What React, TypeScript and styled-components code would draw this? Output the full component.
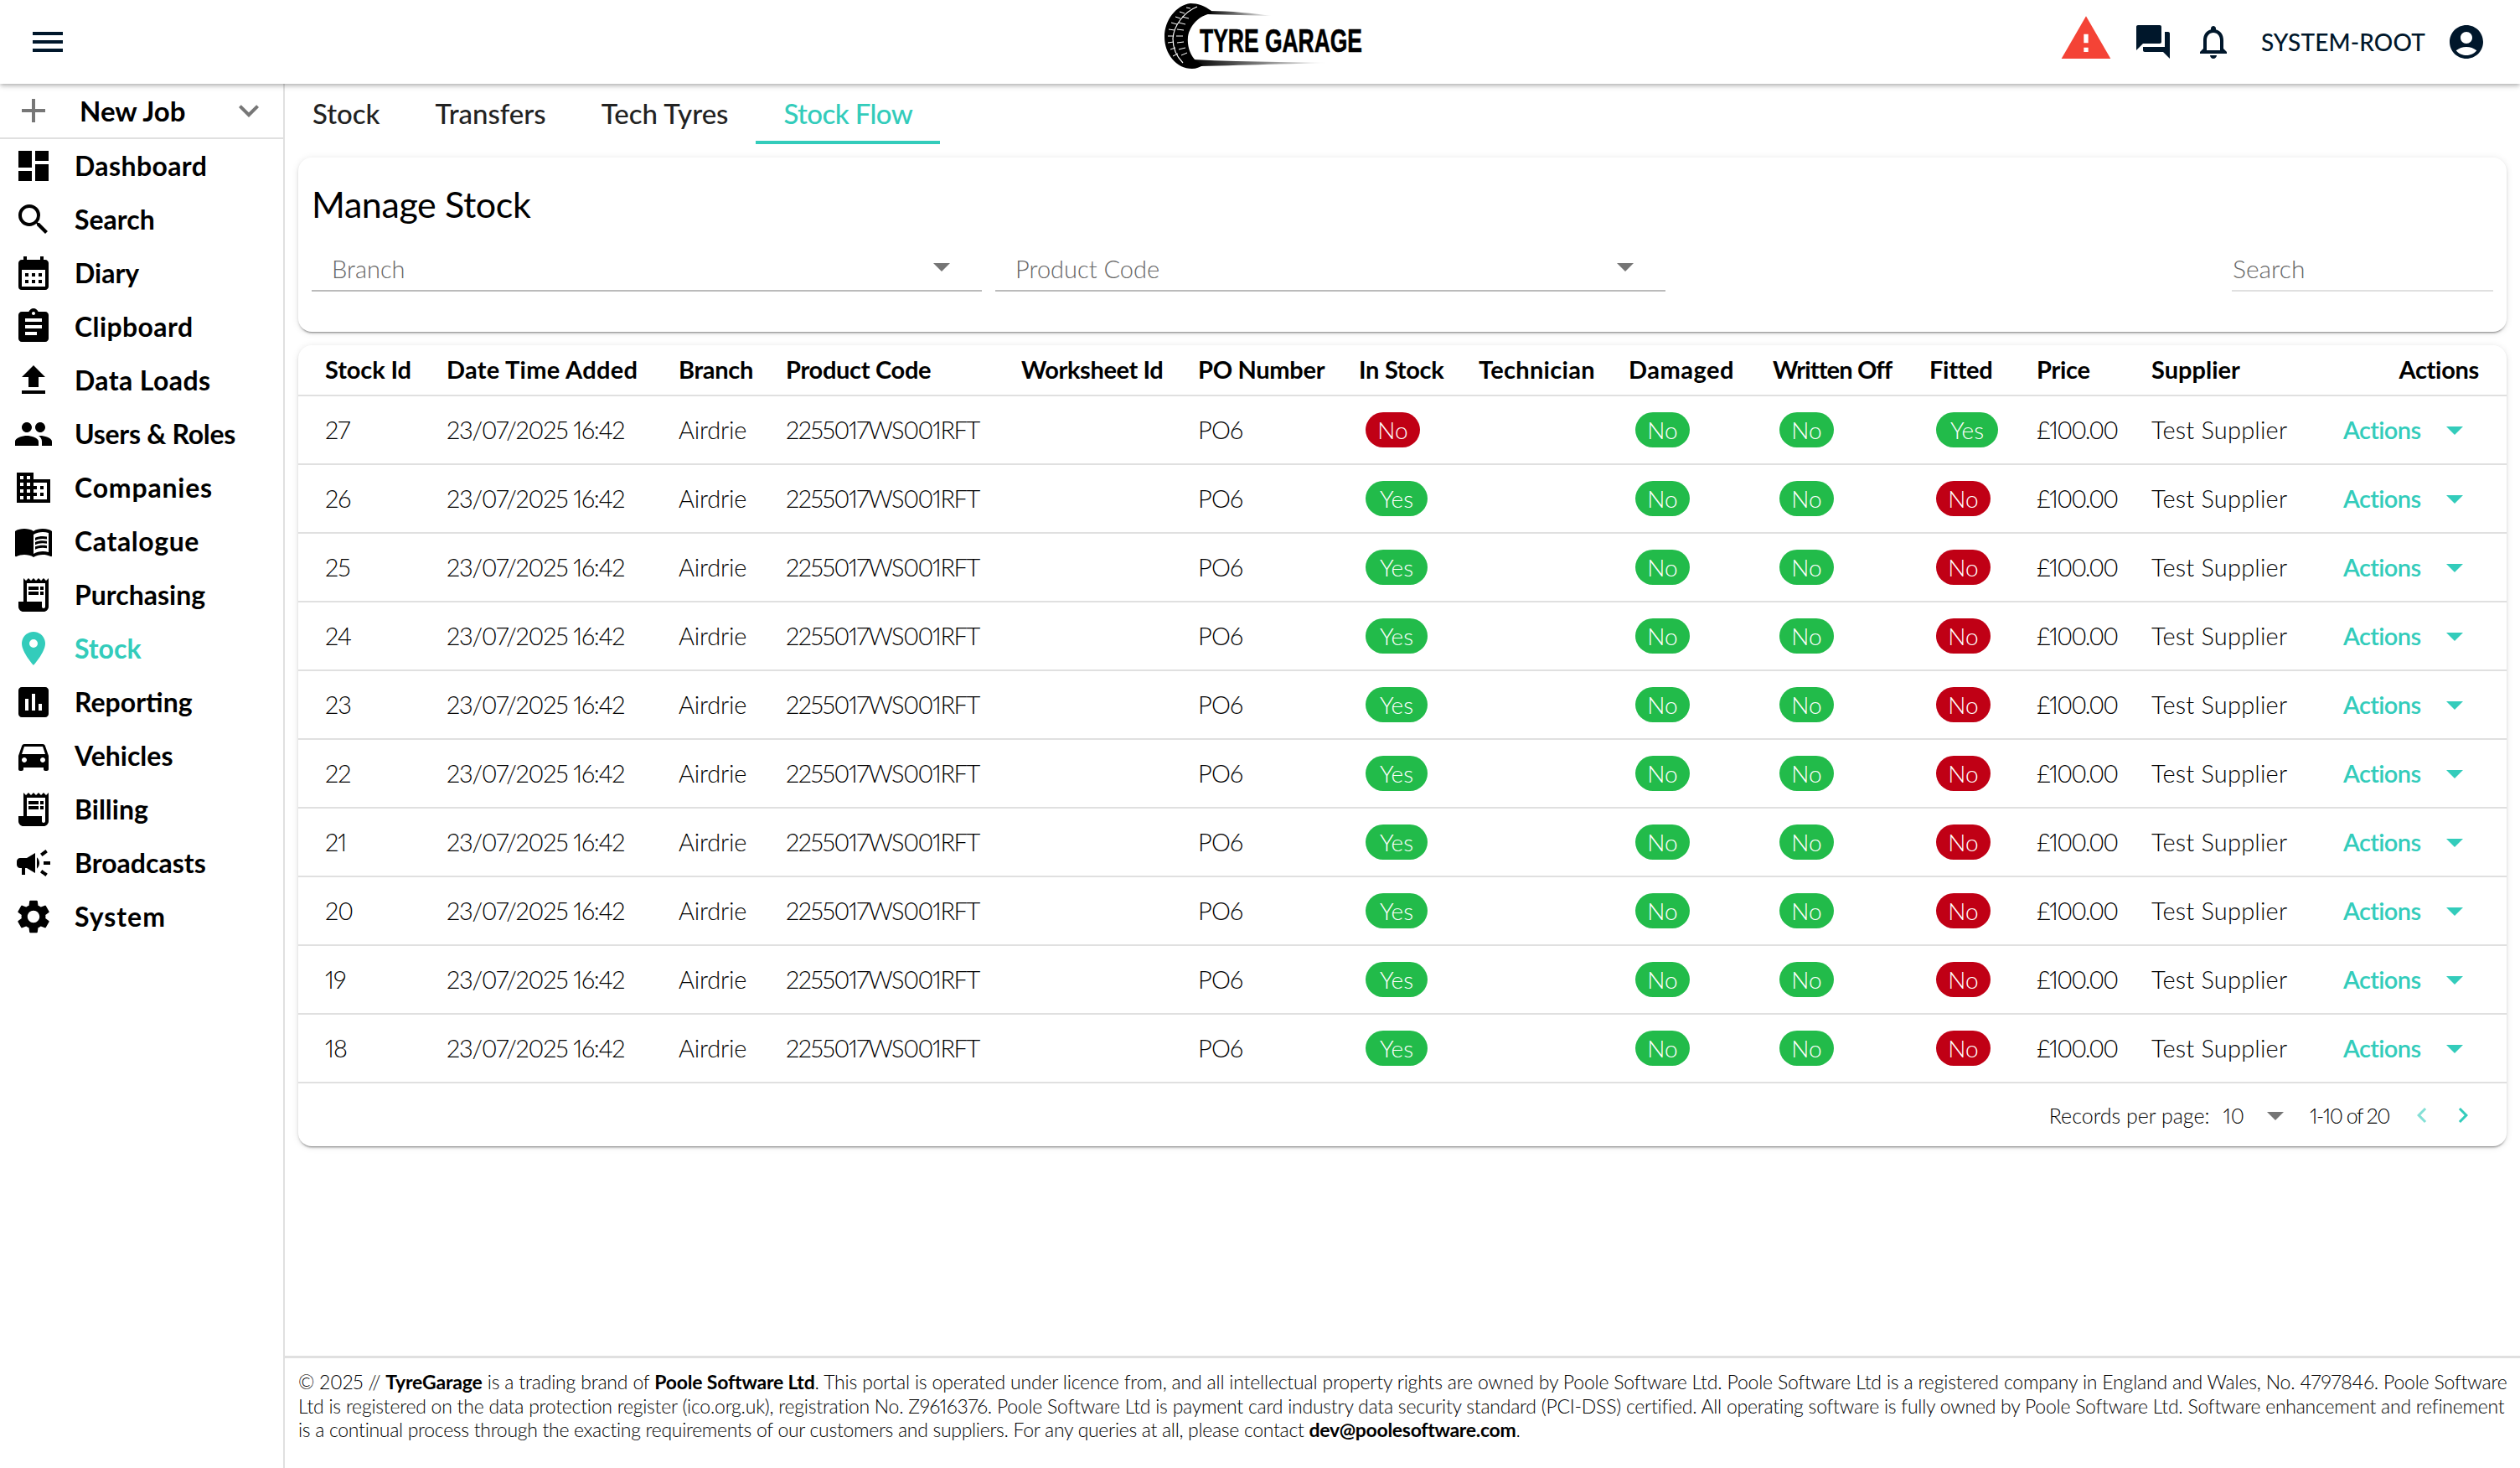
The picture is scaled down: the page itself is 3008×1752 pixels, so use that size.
import styled, { createGlobalStyle } from "styled-components";
import type { IconType } from "react-icons";
import {
  MdAccountCircle,
  MdAdd,
  MdArrowDropDown,
  MdAssessment,
  MdAssignment,
  MdBusiness,
  MdCalendarMonth,
  MdCampaign,
  MdChevronLeft,
  MdChevronRight,
  MdDashboard,
  MdDirectionsCar,
  MdExpandMore,
  MdFileUpload,
  MdForum,
  MdMenu,
  MdMenuBook,
  MdNotificationsNone,
  MdPeople,
  MdPlace,
  MdReceiptLong,
  MdSearch,
  MdSettings,
  MdWarning,
} from "react-icons/md";

const TEAL = "#33ccbb";
const NAVY = "#00172b";
const LINE = "#e0e0e0";

const navItems: { label: string; icon: IconType; tracking?: number }[] = [
  { label: "Dashboard", icon: MdDashboard, tracking: 0.4 },
  { label: "Search", icon: MdSearch },
  { label: "Diary", icon: MdCalendarMonth },
  { label: "Clipboard", icon: MdAssignment, tracking: 0.4 },
  { label: "Data Loads", icon: MdFileUpload, tracking: 0.4 },
  { label: "Users & Roles", icon: MdPeople, tracking: -0.3 },
  { label: "Companies", icon: MdBusiness, tracking: 0.8 },
  { label: "Catalogue", icon: MdMenuBook, tracking: 0.6 },
  { label: "Purchasing", icon: MdReceiptLong },
  { label: "Stock", icon: MdPlace },
  { label: "Reporting", icon: MdAssessment },
  { label: "Vehicles", icon: MdDirectionsCar },
  { label: "Billing", icon: MdReceiptLong },
  { label: "Broadcasts", icon: MdCampaign },
  { label: "System", icon: MdSettings, tracking: 1 },
];

const tabs = ["Stock", "Transfers", "Tech Tyres", "Stock Flow"];

const columns = [
  { title: "Stock Id", width: 158, tracking: -0.1 },
  { title: "Date Time Added", width: 277, tracking: 0.3 },
  { title: "Branch", width: 128, tracking: -0.3 },
  { title: "Product Code", width: 281, tracking: -0.3 },
  { title: "Worksheet Id", width: 211, tracking: -0.4 },
  { title: "PO Number", width: 192, tracking: -0.3 },
  { title: "In Stock", width: 143, tracking: -0.3 },
  { title: "Technician", width: 179, tracking: 0.3 },
  { title: "Damaged", width: 172, tracking: 0.5 },
  { title: "Written Off", width: 187, tracking: -0.85 },
  { title: "Fitted", width: 128, tracking: -0.3 },
  { title: "Price", width: 137, tracking: -0.3 },
  { title: "Supplier", width: 228, tracking: 0 },
];

const rows = [27, 26, 25, 24, 23, 22, 21, 20, 19, 18];

const GlobalStyle = createGlobalStyle`
  html, body {
    margin: 0;
    padding: 0;
    background: #fff;
  }
  body {
    font-family: Lato, "Liberation Sans", sans-serif;
    font-variant-numeric: proportional-nums;
    color: #000;
  }
  * {
    box-sizing: border-box;
  }
`;

const Page = styled.div`
  min-height: 100vh;
  display: flex;
  flex-direction: column;
`;

const Header = styled.header`
  height: 100px;
  display: grid;
  grid-template-columns: 1fr auto 1fr;
  align-items: center;
  padding: 0 40px 0 33px;
  background: #fff;
  position: relative;
  z-index: 2;
  box-shadow: 0 2px 4px -1px rgba(0, 0, 0, 0.2), 0 4px 5px rgba(0, 0, 0, 0.1), 0 1px 10px rgba(0, 0, 0, 0.08);
`;

const HeaderRight = styled.div`
  display: flex;
  align-items: center;
  justify-content: flex-end;
  color: ${NAVY};
`;

const AlertIcon = styled(MdWarning)`
  font-size: 64px;
  color: #f44336;
  margin: 0 24px 8px 0;
`;

const HeaderIcon = styled.span<{ $gap: number }>`
  display: flex;
  font-size: 48px;
  margin-right: ${(p) => p.$gap}px;
`;

const UserName = styled.span`
  font-size: 28px;
  font-weight: 500;
  letter-spacing: 0.15px;
  margin-right: 25px;
`;

const Logo = styled.svg`
  display: block;
  width: 236px;
  height: 78px;
  margin: 0 0 14px 14px;
  overflow: visible;
`;

const LogoText = styled.text`
  font-family: "Liberation Sans Narrow", "Liberation Sans", sans-serif;
  font-weight: 700;
  font-size: 39px;
  stroke: #000;
  stroke-width: 0.6px;
`;

const Body = styled.div`
  flex: 1;
  display: flex;
`;

const Sidebar = styled.aside`
  width: 340px;
  flex: none;
  border-right: 2px solid ${LINE};
`;

const NewJob = styled.div`
  height: 66px;
  display: flex;
  align-items: center;
  padding: 0 17px 0 16px;
  border-bottom: 2px solid ${LINE};
  color: #777;
  font-size: 48px;
`;

const NewJobLabel = styled.span`
  flex: 1;
  padding-left: 31px;
  font-size: 33px;
  font-weight: 700;
  color: #000;
`;

const NavItem = styled.div<{ $active?: boolean }>`
  height: 64px;
  display: flex;
  align-items: center;
  gap: 25px;
  padding-left: 16px;
  color: ${(p) => (p.$active ? TEAL : "#000")};

  svg {
    font-size: 48px;
    flex: none;
  }
`;

const NavLabel = styled.span<{ $tracking?: number }>`
  padding-bottom: 2px;
  font-size: 32px;
  font-weight: 700;
  letter-spacing: ${(p) => p.$tracking ?? 0}px;
`;

const Main = styled.main`
  flex: 1;
  min-width: 0;
  display: flex;
  flex-direction: column;
`;

const TabBar = styled.nav`
  height: 72px;
  display: flex;
`;

const Tab = styled.div<{ $active?: boolean }>`
  padding: 2px 33px 0;
  display: flex;
  align-items: center;
  font-size: 33px;
  font-weight: 500;
  letter-spacing: ${(p) => (p.$active ? "-0.6px" : "0")};
  color: ${(p) => (p.$active ? TEAL : "#222")};
  border-bottom: 4px solid ${(p) => (p.$active ? TEAL : "transparent")};
`;

const Content = styled.div`
  padding: 16px 16px 0;
  display: flex;
  flex-direction: column;
  gap: 16px;
`;

const Card = styled.section`
  background: #fff;
  border-radius: 16px;
  box-shadow: 0 3px 2px -2px rgba(0, 0, 0, 0.35), 0 2px 3px rgba(0, 0, 0, 0.12), 0 1px 8px rgba(0, 0, 0, 0.1);
`;

const FilterCard = styled(Card)`
  height: 208px;
  padding: 26px 16px 0;
`;

const Title = styled.h2`
  margin: 0;
  height: 62px;
  line-height: 60px;
  font-size: 43px;
  font-weight: 400;
  letter-spacing: -0.4px;
`;

const Filters = styled.div`
  display: flex;
  gap: 16px;
`;

const Select = styled.div`
  width: 800px;
  height: 72px;
  display: flex;
  align-items: flex-end;
  justify-content: space-between;
  padding: 0 24px 8px 24px;
  border-bottom: 2px solid #bbb;
  color: #666;
  font-size: 29px;
  font-weight: 300;

  svg {
    font-size: 48px;
    margin-bottom: -4px;
    color: #757575;
  }
`;

const SearchField = styled.div`
  margin-left: auto;
  width: 312px;
  height: 72px;
  display: flex;
  align-items: flex-end;
  padding: 0 0 8px 1px;
  border-bottom: 2px solid ${LINE};
  color: #666;
  font-size: 30px;
  font-weight: 300;
`;

const StockTable = styled.table`
  width: 100%;
  table-layout: fixed;
  border-collapse: collapse;
`;

const Col = styled.col<{ $width?: number }>`
  width: ${(p) => (p.$width ? `${p.$width}px` : "auto")};
`;

const HeadCell = styled.th<{ $right?: boolean; $tracking?: number }>`
  height: 60px;
  padding: 0 ${(p) => (p.$right ? "33px" : "0")} 2px 19px;
  border-bottom: 2px solid ${LINE};
  font-size: 29px;
  font-weight: 700;
  letter-spacing: ${(p) => p.$tracking ?? 0}px;
  white-space: nowrap;
  text-align: ${(p) => (p.$right ? "right" : "left")};

  &:first-child {
    padding-left: 32px;
  }
`;

const Cell = styled.td<{ $tracking?: number }>`
  height: 82px;
  padding: 0 0 2px 19px;
  border-bottom: 2px solid ${LINE};
  font-size: 29px;
  font-weight: 300;
  letter-spacing: ${(p) => p.$tracking ?? 0}px;
  white-space: nowrap;

  &:first-child {
    padding-left: 32px;
  }
`;

const Chip = styled.span<{ $tone: "green" | "red"; $wide?: boolean }>`
  display: inline-flex;
  align-items: center;
  justify-content: center;
  vertical-align: middle;
  margin: 2px 0 0 8px;
  width: ${(p) => (p.$wide ? "74px" : "65px")};
  height: 42px;
  border-radius: 21px;
  background: ${(p) => (p.$tone === "green" ? "#22bb4a" : "#c00015")};
  color: #fff;
  font-size: 28px;
  font-weight: 300;
`;

const ActionButton = styled.div`
  display: flex;
  align-items: center;
  gap: 16px;
  padding-left: 1px;
  color: ${TEAL};
  font-weight: 600;
  letter-spacing: -0.6px;

  svg {
    font-size: 48px;
    margin-top: 2px;
  }
`;

const Pager = styled.div`
  height: 75px;
  display: flex;
  align-items: center;
  justify-content: flex-end;
  padding-right: 34px;
  font-size: 25px;
  font-weight: 300;
`;

const PerPage = styled.span`
  margin-right: 16px;
`;

const PageCount = styled.span`
  letter-spacing: -1.5px;
`;

const PagerArrow = styled(MdArrowDropDown)`
  font-size: 48px;
  color: #757575;
  margin: 0 17px 0 13px;
`;

const PagerNav = styled.span<{ $dim?: boolean }>`
  display: flex;
  font-size: 36px;
  margin-left: ${(p) => (p.$dim ? 21 : 13)}px;
  color: ${TEAL};
  opacity: ${(p) => (p.$dim ? 0.6 : 1)};
`;

const Footer = styled.footer`
  margin-top: auto;
  height: 134px;
  padding: 14px 16px 0;
  border-top: 3px solid ${LINE};
  font-size: 23px;
  font-weight: 300;
  line-height: 28.5px;
  white-space: nowrap;

  b {
    font-weight: 700;
  }
`;

const FooterLine = styled.div<{ $tracking: number }>`
  letter-spacing: ${(p) => p.$tracking}px;
`;

function TyreLogo() {
  return (
    <Logo viewBox="0 0 236 78">
      <defs>
        <linearGradient id="fade">
          <stop offset="0" stopColor="#000" />
          <stop offset="1" stopColor="#000" stopOpacity="0" />
        </linearGradient>
      </defs>
      <path d="M52 9C80 9 105 12 129 15C105 14 75 14 52 13Z" fill="url(#fade)" />
      <path d="M34 67C90 70 150 70 196 71C150 72 90 74 42 75Z" fill="url(#fade)" />
      <path d="M56 9C48 3 40 0 31 0C14 2 0 20 0 40C0 60 14 78 33 78C38 78 42 76 46 74L36 67C30 60 27 50 28 40C30 26 42 14 56 12Z" />
      <path
        d="M39 4C24 10 11 26 10 42C10 54 14 63 22 71"
        fill="none"
        stroke="#fff"
        strokeWidth="1.2"
      />
      <path
        d="M31 6l-5 -1M24 12l-6 -2M19 18l-6 -2M15 25l-7 -2M12 32l-7 -1M11 39h-7M11 46l-7 1M13 53l-6 2M16 60l-6 3M21 16l8 2M17 23l8 2M15 31l8 1M14 39h8M15 47l8 -1M17 55l8 -2M20 62l7 -3"
        fill="none"
        stroke="#fff"
        strokeWidth="1"
      />
      <LogoText x="42" y="58" textLength="194" lengthAdjust="spacingAndGlyphs">
        TYRE GARAGE
      </LogoText>
    </Logo>
  );
}

export default function App() {
  return (
    <Page>
      <GlobalStyle />
      <Header>
        <MdMenu size={48} color={NAVY} />
        <TyreLogo />
        <HeaderRight>
          <AlertIcon />
          <HeaderIcon $gap={24}>
            <MdForum />
          </HeaderIcon>
          <HeaderIcon $gap={33}>
            <MdNotificationsNone />
          </HeaderIcon>
          <UserName>SYSTEM-ROOT</UserName>
          <HeaderIcon $gap={0}>
            <MdAccountCircle />
          </HeaderIcon>
        </HeaderRight>
      </Header>
      <Body>
        <Sidebar>
          <NewJob>
            <MdAdd />
            <NewJobLabel>New Job</NewJobLabel>
            <MdExpandMore />
          </NewJob>
          {navItems.map((item) => (
            <NavItem key={item.label} $active={item.label === "Stock"}>
              <item.icon />
              <NavLabel $tracking={item.tracking}>{item.label}</NavLabel>
            </NavItem>
          ))}
        </Sidebar>
        <Main>
          <TabBar>
            {tabs.map((tab) => (
              <Tab key={tab} $active={tab === "Stock Flow"}>
                {tab}
              </Tab>
            ))}
          </TabBar>
          <Content>
            <FilterCard>
              <Title>Manage Stock</Title>
              <Filters>
                <Select>
                  Branch
                  <MdArrowDropDown />
                </Select>
                <Select>
                  Product Code
                  <MdArrowDropDown />
                </Select>
                <SearchField>Search</SearchField>
              </Filters>
            </FilterCard>
            <Card>
              <StockTable>
                <colgroup>
                  {columns.map((c) => (
                    <Col key={c.title} $width={c.width} />
                  ))}
                  <Col />
                </colgroup>
                <thead>
                  <tr>
                    {columns.map((c) => (
                      <HeadCell key={c.title} $tracking={c.tracking}>
                        {c.title}
                      </HeadCell>
                    ))}
                    <HeadCell $right $tracking={-0.3}>
                      Actions
                    </HeadCell>
                  </tr>
                </thead>
                <tbody>
                  {rows.map((id) => {
                    const first = id === 27;
                    return (
                      <tr key={id}>
                        <Cell $tracking={-1}>{id}</Cell>
                        <Cell $tracking={-1.2}>23/07/2025 16:42</Cell>
                        <Cell $tracking={-0.2}>Airdrie</Cell>
                        <Cell $tracking={-1.45}>2255017WS001RFT</Cell>
                        <Cell />
                        <Cell $tracking={-0.8}>PO6</Cell>
                        <Cell>
                          <Chip $tone={first ? "red" : "green"} $wide={!first}>
                            {first ? "No" : "Yes"}
                          </Chip>
                        </Cell>
                        <Cell />
                        <Cell>
                          <Chip $tone="green">No</Chip>
                        </Cell>
                        <Cell>
                          <Chip $tone="green">No</Chip>
                        </Cell>
                        <Cell>
                          <Chip $tone={first ? "green" : "red"} $wide={first}>
                            {first ? "Yes" : "No"}
                          </Chip>
                        </Cell>
                        <Cell $tracking={-1.8}>£100.00</Cell>
                        <Cell $tracking={0.2}>Test Supplier</Cell>
                        <Cell>
                          <ActionButton>
                            Actions
                            <MdArrowDropDown />
                          </ActionButton>
                        </Cell>
                      </tr>
                    );
                  })}
                </tbody>
              </StockTable>
              <Pager>
                <PerPage>Records per page:</PerPage>
                10
                <PagerArrow />
                <PageCount>1-10 of 20</PageCount>
                <PagerNav $dim>
                  <MdChevronLeft />
                </PagerNav>
                <PagerNav>
                  <MdChevronRight />
                </PagerNav>
              </Pager>
            </Card>
          </Content>
          <Footer>
            <FooterLine $tracking={-0.18}>
              © 2025 // <b>TyreGarage</b> is a trading brand of <b>Poole Software Ltd</b>. This portal is operated under
              licence from, and all intellectual property rights are owned by Poole Software Ltd. Poole Software Ltd is a
              registered company in England and Wales, No. 4797846. Poole Software
            </FooterLine>
            <FooterLine $tracking={-0.24}>
              Ltd is registered on the data protection register (ico.org.uk), registration No. Z9616376. Poole Software
              Ltd is payment card industry data security standard (PCI-DSS) certified. All operating software is fully
              owned by Poole Software Ltd. Software enhancement and refinement
            </FooterLine>
            <FooterLine $tracking={-0.3}>
              is a continual process through the exacting requirements of our customers and suppliers. For any queries at
              all, please contact <b>dev@poolesoftware.com</b>.
            </FooterLine>
          </Footer>
        </Main>
      </Body>
    </Page>
  );
}
